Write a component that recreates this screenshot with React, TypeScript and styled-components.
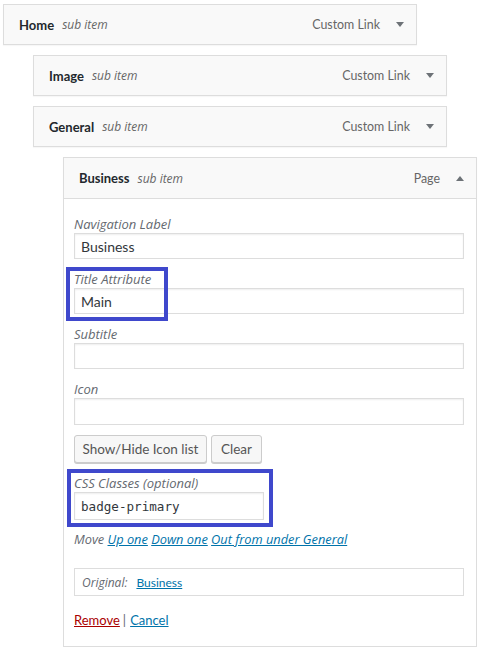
import React from "react";
import styled, { createGlobalStyle } from "styled-components";

const SANS = '"Lato", "Open Sans", "Noto Sans", sans-serif';
const ITALIC = '"Open Sans", "Noto Sans", sans-serif';
const MONO = '"DejaVu Sans Mono", "Liberation Mono", monospace';

const GlobalStyle = createGlobalStyle`
  html, body { margin: 0; padding: 0; background: #ffffff; }
  body { font-family: ${SANS}; font-size: 13px; color: #444; }
  * { box-sizing: border-box; }
`;

const Page = styled.div`
  padding: 4px 0 0 3px;
  width: 483px;
`;

const Item = styled.div<{ $depth: number }>`
  width: 414px;
  margin-left: ${(p) => p.$depth * 30}px;
  margin-bottom: 10px;
`;

const Handle = styled.div<{ $open?: boolean }>`
  height: ${(p) => (p.$open ? 42 : 41)}px;
  display: flex;
  align-items: center;
  padding: 0 12px 0 15px;
  background: #f9f9f9;
  border: 1px solid #dddddd;
  box-shadow: 0 1px 1px rgba(0, 0, 0, 0.03);
`;

const ItemTitle = styled.span`
  font-family: ${SANS};
  font-weight: 700;
  color: #23282d;
  font-size: 13px;
`;

const SubTag = styled.span`
  font-family: ${ITALIC};
  font-style: italic;
  font-size: 12px;
  color: #666;
  margin-left: 8px;
`;

const ItemType = styled.span`
  margin-left: auto;
  font-size: 12.4px;
  color: #666;
  margin-right: 16px;
`;

const Arrow = styled.svg`
  width: 8px;
  height: 5px;
  display: block;
`;

const Settings = styled.div`
  border: 1px solid #dddddd;
  border-top: none;
  padding: 16px 12px 17px 10px;
  background: #fff;
`;

const Field = styled.div<{ $mb?: number }>`
  position: relative;
  margin-bottom: ${(p) => p.$mb ?? 11}px;
`;

const Label = styled.label`
  display: block;
  font-family: ${ITALIC};
  font-style: italic;
  color: #646970;
  line-height: 18px;
  font-size: 13px;
`;

const Input = styled.div<{ $h?: number; $w?: number; $mono?: boolean }>`
  height: ${(p) => p.$h ?? 26}px;
  width: ${(p) => (p.$w ? `${p.$w}px` : "100%")};
  border: 1px solid #dddddd;
  box-shadow: inset 0 1px 2px rgba(0, 0, 0, 0.07);
  background: #fff;
  color: #32373c;
  padding: 0 6px;
  display: flex;
  align-items: center;
  font-size: ${(p) => (p.$mono ? "12.6px" : "14px")};
  font-family: ${(p) => (p.$mono ? MONO : SANS)};
`;

const Highlight = styled.div<{ $top: number; $left: number; $w: number; $h: number }>`
  position: absolute;
  top: ${(p) => p.$top}px;
  left: ${(p) => p.$left}px;
  width: ${(p) => p.$w}px;
  height: ${(p) => p.$h}px;
  border: 4px solid #3f48cc;
  pointer-events: none;
`;

const ButtonRow = styled.div`
  display: flex;
  gap: 4px;
  margin-bottom: 11px;
`;

const Button = styled.button<{ $w: number }>`
  width: ${(p) => p.$w}px;
  height: 28px;
  padding: 0;
  font-family: ${SANS};
  font-size: 13.5px;
  color: #555;
  background: #f7f7f7;
  border: 1px solid #cccccc;
  border-radius: 3px;
  box-shadow: 0 1px 0 #cccccc;
`;

const MoveLine = styled.div`
  font-family: ${ITALIC};
  font-style: italic;
  font-size: 12.8px;
  color: #646970;
  line-height: 18px;
  margin-bottom: 20px;
  white-space: pre;
`;

const Link = styled.a<{ $danger?: boolean }>`
  color: ${(p) => (p.$danger ? "#aa0000" : "#0073aa")};
  text-decoration: underline;
  cursor: pointer;
`;

const Original = styled.div`
  height: 28px;
  border: 1px solid #dddddd;
  display: flex;
  align-items: center;
  padding: 0 7px;
  gap: 9px;
  margin-bottom: 15px;
  font-size: 12px;
`;

const OriginalLabel = styled.span`
  font-family: ${ITALIC};
  font-style: italic;
  color: #646970;
`;

const Actions = styled.div`
  line-height: 18px;
  font-size: 13px;
  color: #646970;
`;

const Sep = styled.span`
  margin: 0 4px 0 3px;
`;

const DownArrow = () => (
  <Arrow viewBox="0 0 8 5">
    <polygon points="0,0 8,0 4,5" fill="#6d7277" />
  </Arrow>
);

const UpArrow = () => (
  <Arrow viewBox="0 0 8 5">
    <polygon points="0,5 8,5 4,0" fill="#6d7277" />
  </Arrow>
);

const items = [
  { title: "Home", depth: 0 },
  { title: "Image", depth: 1 },
  { title: "General", depth: 1 },
];

export default function App() {
  return (
    <>
      <GlobalStyle />
      <Page>
        {items.map((it) => (
          <Item key={it.title} $depth={it.depth}>
            <Handle>
              <ItemTitle>{it.title}</ItemTitle>
              <SubTag>sub item</SubTag>
              <ItemType>Custom Link</ItemType>
              <DownArrow />
            </Handle>
          </Item>
        ))}
        <Item $depth={2}>
          <Handle $open>
            <ItemTitle>Business</ItemTitle>
            <SubTag>sub item</SubTag>
            <ItemType>Page</ItemType>
            <UpArrow />
          </Handle>
          <Settings>
            <Field>
              <Label>Navigation Label</Label>
              <Input>Business</Input>
            </Field>
            <Field>
              <Label>Title Attribute</Label>
              <Input>Main</Input>
              <Highlight $top={-3} $left={-8} $w={102} $h={54} />
            </Field>
            <Field>
              <Label>Subtitle</Label>
              <Input />
            </Field>
            <Field $mb={10}>
              <Label>Icon</Label>
              <Input $h={27} />
            </Field>
            <ButtonRow>
              <Button $w={133}>Show/Hide Icon list</Button>
              <Button $w={51}>Clear</Button>
            </ButtonRow>
            <Field $mb={10}>
              <Label>CSS Classes (optional)</Label>
              <Input $h={28} $w={190} $mono>
                badge-primary
              </Input>
              <Highlight $top={-5} $left={-7} $w={206} $h={58} />
            </Field>
            <MoveLine>
              Move <Link>Up one</Link> <Link>Down one</Link>{" "}
              <Link>Out from under General</Link>
            </MoveLine>
            <Original>
              <OriginalLabel>Original:</OriginalLabel>
              <Link>Business</Link>
            </Original>
            <Actions>
              <Link $danger>Remove</Link>
              <Sep>|</Sep>
              <Link>Cancel</Link>
            </Actions>
          </Settings>
        </Item>
      </Page>
    </>
  );
}
